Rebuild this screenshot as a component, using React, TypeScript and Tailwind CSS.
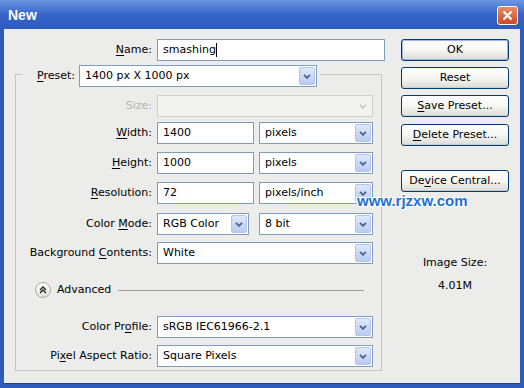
import React from 'react';

const ui = "font-['DejaVu_Sans',sans-serif] text-[11px] text-black";

function Key({ text, k }: { text: string; k: number }) {
  // underline the access key letter at index k
  return (
    <>
      {text.slice(0, k)}
      <span className="underline underline-offset-2">{text[k]}</span>
      {text.slice(k + 1)}
    </>
  );
}

function Chevron({ color }: { color: string }) {
  return (
    <svg width="8" height="5" viewBox="0 0 8 5">
      <path d="M1 0.8 L4 3.8 L7 0.8" fill="none" stroke={color} strokeWidth="1.8" />
    </svg>
  );
}

function Select({ value, w, disabled }: { value?: string; w: string; disabled?: boolean }) {
  return (
    <div
      className={`${w} h-[22px] flex items-center border ${
        disabled ? 'border-[#cfcfc8] bg-[#f3f3f0]' : 'border-[#7f9db9] bg-white'
      }`}
    >
      <span className="flex-1 pl-[5px] truncate">{value}</span>
      <div
        className={`w-[16px] h-[18px] mr-px flex items-center justify-center rounded-[2px] ${
          disabled
            ? 'bg-[#f3f3f0]'
            : 'border border-[#b6c6ea] bg-gradient-to-b from-[#dfe8fb] to-[#b9cbf1]'
        }`}
      >
        <Chevron color={disabled ? '#c9c9c9' : '#4d6185'} />
      </div>
    </div>
  );
}

function Field({ value, w, caret }: { value: string; w: string; caret?: boolean }) {
  return (
    <div className={`${w} h-[22px] flex items-center border border-[#7f9db9] bg-white pl-[5px]`}>
      <span>{value}</span>
      {caret && <span className="w-px h-[14px] bg-black" />}
    </div>
  );
}

function Row({ label, mt, children, dim }: { label: React.ReactNode; mt: string; children: React.ReactNode; dim?: boolean }) {
  return (
    <div className={`${mt} flex items-center h-[22px]`}>
      <div className={`w-[141px] pr-[5px] text-right ${dim ? 'text-[#b5b5ad]' : ''}`}>{label}</div>
      {children}
    </div>
  );
}

function XPButton({ children, mt, def }: { children: React.ReactNode; mt: string; def?: boolean }) {
  return (
    <div
      className={`${mt} w-[108px] h-[22px] flex items-center justify-center rounded-[3px] border border-[#003c74] bg-gradient-to-b from-[#ffffff] via-[#f6f6f3] to-[#dcdcd6] ${
        def ? 'shadow-[inset_0_0_0_1px_#9ab5e8]' : 'shadow-[inset_0_-1px_0_#cfcfc8]'
      }`}
    >
      {children}
    </div>
  );
}

export default function App() {
  return (
    <div className={`${ui} relative w-[524px] h-[388px] flex flex-col bg-[#2f5bbd]`}>
      {/* title bar */}
      <div className="h-[29px] flex items-center justify-between pl-[8px] pr-[6px] bg-gradient-to-b from-[#6d95e0] via-[#3565c9] to-[#2d5cbf]">
        <span className="font-['Liberation_Sans',sans-serif] font-bold text-[14px] text-white mt-px">New</span>
        <div className="w-[21px] h-[19px] mt-[2px] rounded-[3px] border border-white bg-gradient-to-b from-[#e88a64] to-[#c94a22] flex items-center justify-center">
          <svg width="11" height="11" viewBox="0 0 11 11">
            <path d="M1.5 1.5 L9.5 9.5 M9.5 1.5 L1.5 9.5" stroke="#fff" strokeWidth="2" />
          </svg>
        </div>
      </div>

      {/* dialog body */}
      <div className="flex-1 mx-[4px] mb-[4px] bg-[#ececea] flex border-b border-[#233d8c]">
        <div className="w-[386px] flex flex-col">
          <div className="mt-[10px] flex items-center h-[22px]">
            <div className="w-[153px] pr-[5px] text-right">
              <Key text="Name:" k={0} />
            </div>
            <Field value="smashing" w="w-[228px]" caret />
          </div>

          <div className="mt-[13px] ml-[11px] w-[367px] border border-[#c6c6c0] pb-[3px] flex flex-col">
            {/* legend */}
            <div className="-mt-[10px] ml-[6px] w-fit bg-[#ececea] flex items-center pl-[15px] pr-[3px]">
              <span className="mr-[4px]">
                <Key text="Preset:" k={0} />
              </span>
              <Select value="1400 px X 1000 px" w="w-[238px]" />
            </div>

            <Row label="Size:" mt="mt-[8px]" dim>
              <Select w="w-[216px]" disabled />
            </Row>
            <Row label={<Key text="Width:" k={0} />} mt="mt-[5px]">
              <Field value="1400" w="w-[97px]" />
              <div className="ml-[5px]">
                <Select value="pixels" w="w-[114px]" />
              </div>
            </Row>
            <Row label={<Key text="Height:" k={0} />} mt="mt-[8px]">
              <Field value="1000" w="w-[97px]" />
              <div className="ml-[5px]">
                <Select value="pixels" w="w-[114px]" />
              </div>
            </Row>
            <Row label={<Key text="Resolution:" k={0} />} mt="mt-[8px]">
              <Field value="72" w="w-[97px]" />
              <div className="ml-[5px]">
                <Select value="pixels/inch" w="w-[114px]" />
              </div>
            </Row>
            <Row label={<Key text="Color Mode:" k={6} />} mt="mt-[9px]">
              <Select value="RGB Color" w="w-[92px]" />
              <div className="ml-[10px]">
                <Select value="8 bit" w="w-[114px]" />
              </div>
            </Row>
            <Row label={<Key text="Background Contents:" k={11} />} mt="mt-[7px]">
              <Select value="White" w="w-[216px]" />
            </Row>

            {/* advanced */}
            <div className="mt-[18px] h-[16px] flex items-center">
              <div className="ml-[19px] w-[16px] h-[16px] rounded-full border border-[#a9a9a2] bg-gradient-to-b from-white to-[#e2e2dc] flex items-center justify-center">
                <svg width="8" height="8" viewBox="0 0 8 8">
                  <path d="M1 4 L4 1 L7 4 M1 7 L4 4 L7 7" fill="none" stroke="#222" strokeWidth="1.3" />
                </svg>
              </div>
              <span className="ml-[6px]">Advanced</span>
              <div className="flex-1 ml-[7px] mr-[17px] h-px bg-[#9c9c96]" />
            </div>

            <Row label={<Key text="Color Profile:" k={8} />} mt="mt-[18px]">
              <Select value="sRGB IEC61966-2.1" w="w-[216px]" />
            </Row>
            <Row label={<Key text="Pixel Aspect Ratio:" k={2} />} mt="mt-[7px]">
              <Select value="Square Pixels" w="w-[216px]" />
            </Row>
          </div>
        </div>

        <div className="pl-[11px] flex flex-col">
          <XPButton mt="mt-[10px]" def>OK</XPButton>
          <XPButton mt="mt-[6px]">Reset</XPButton>
          <XPButton mt="mt-[6px]">
            <Key text="Save Preset..." k={0} />
          </XPButton>
          <XPButton mt="mt-[7px]">
            <Key text="Delete Preset..." k={0} />
          </XPButton>
          <XPButton mt="mt-[24px]">
            <Key text="Device Central..." k={2} />
          </XPButton>
          <div className="mt-[64px] h-[14px] leading-[14px] text-center">Image Size:</div>
          <div className="mt-[9px] h-[14px] leading-[14px] text-center">4.01M</div>
        </div>
      </div>

      {/* watermark */}
      <div className="absolute left-[357px] top-[190px] font-['Liberation_Sans',sans-serif] font-bold text-[15px] text-[#1e6fd6] [text-shadow:1px_1px_0_#fff,-1px_-1px_0_#fff,1px_-1px_0_#fff,-1px_1px_0_#fff,0_1px_0_#fff,0_-1px_0_#fff,1px_0_0_#fff,-1px_0_0_#fff]">
        www.rjzxw.com
      </div>
    </div>
  );
}
